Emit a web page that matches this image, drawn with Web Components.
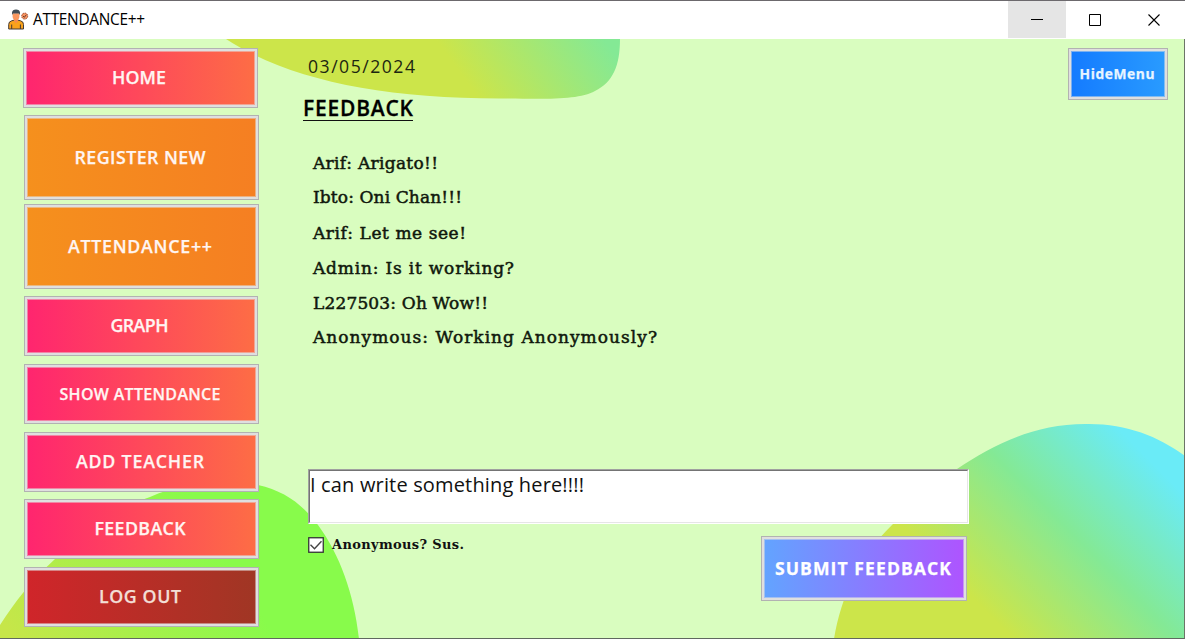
<!DOCTYPE html>
<html lang="en">
<head>
<meta charset="utf-8">
<title>ATTENDANCE++</title>
<style>
html,body{margin:0;height:100%;overflow:hidden;font-family:"Open Sans","Noto Sans",sans-serif}
</style>
</head>
<body>
<app-window></app-window>
<script>
const define = (name, html, setup) => {
  const t = document.createElement('template');
  t.innerHTML = html;
  customElements.define(name, class extends HTMLElement {
    constructor() {
      super();
      this.attachShadow({mode: 'open'}).append(t.content.cloneNode(true));
    }
    connectedCallback() { if (setup) setup(this, this.shadowRoot); }
  });
};

/* One line of text, tracked so that it fills the width given in "w". */
define('fit-text', `
<style>:host{display:block;white-space:nowrap;line-height:1}span{display:inline-block}</style>
<span><slot></slot></span>`, (el, root) => {
  const w = parseFloat(el.getAttribute('w')), s = root.querySelector('span');
  if (!w) return;
  const n = el.textContent.length;
  s.style.letterSpacing = '0px';
  const ls = (w - s.getBoundingClientRect().width) / (n - 1);
  s.style.letterSpacing = ls + 'px';
  s.style.marginRight = -ls + 'px';
});

define('raised-button', `
<style>
:host{display:block;box-sizing:border-box;border:1px solid #b2b2b2;height:var(--h,60px);width:var(--w,235px);color:#fff5f2;font-size:17.8px;font-weight:600;-webkit-text-stroke:.25px}
div{box-sizing:border-box;height:100%;border:2px solid #dfdfdf;background:var(--bg,linear-gradient(90deg,#ff256f,#fd6d45));display:flex;align-items:center;justify-content:center;padding:0 var(--pr,3px) var(--pb,0px) 0;box-shadow:inset 0 0 0 1px rgba(225,225,225,.5)}
</style>
<div><slot></slot></div>`);

define('person-icon', `
<style>:host{display:block;width:21px;height:21px}svg{display:block}</style>
<svg width="21" height="21" viewBox="0 0 21 21">
<path d="M.7 20v-4.5q0-3 3-3.700l2.800-.8h3l3 .8q3 .7 3 3.700V20z" fill="#f9a21b" stroke="#453b37"/>
<path d="M6 9v3l2 2.200 2-2.200V9z" fill="#f28a50"/>
<path d="M4.600 4.300v3q0 3.800 3.400 3.800t3.400-3.800v-3z" fill="#f9975f"/>
<path d="M4 6V3.500Q4.400.5 8 .5q3.700 0 4 3V6l-1-1.500H5z" fill="#414d56"/>
<path d="M3.700 15.500V20M12.400 15.500V20" stroke="#453b37"/>
<circle cx="16.700" cy="7.100" r="3" fill="#f79360" stroke="#9a4c32" stroke-dasharray="1.5 .8"/>
<path d="M15.100 7l1.200 1.300 2-2.500" fill="none" stroke="#653729"/>
</svg>`);

define('title-bar', `
<style>
:host{display:flex;height:39px;box-sizing:border-box;border-top:1px solid #6c696d;background:#fff;align-items:flex-start}
person-icon{margin:8px 0 0 8px}
fit-text{font-size:15.400px;margin:11px 0 0 4px;color:#000}
nav{display:flex;margin-left:auto;margin-right:1px}
nav span{width:58px;height:37px;display:block}
nav span.on{background:#e5e5e5}
nav span:last-child{width:60px}
svg{display:block}
</style>
<person-icon></person-icon><fit-text w="112">ATTENDANCE++</fit-text>
<nav>
<span class="on"><svg width="58" height="37"><path d="M23 18.500h12" stroke="#000"/></svg></span>
<span><svg width="58" height="37"><path d="M23.500 13.500h11v11h-11z" fill="none" stroke="#000"/></svg></span>
<span><svg width="58" height="37"><path d="M24.500 13.500l11 11m0-11l-11 11" stroke="#000" stroke-width="1.100"/></svg></span>
</nav>`);

define('page-backdrop', `
<style>:host{position:absolute;inset:0;z-index:-1;overflow:hidden}svg{display:block}</style>
<svg width="1185" height="600" viewBox="0 39 1185 600">
<defs>
<linearGradient id="a" gradientUnits="userSpaceOnUse" x1="480" y1="100" x2="590" y2="20"><stop stop-color="#cce54a"/><stop offset="1" stop-color="#84e995"/></linearGradient>
<linearGradient id="b" gradientUnits="userSpaceOnUse" x1="20" y1="650" x2="215" y2="535"><stop stop-color="#c6e649"/><stop offset=".45" stop-color="#a9ef4a"/><stop offset="1" stop-color="#88fb4b"/></linearGradient>
<linearGradient id="c" gradientUnits="userSpaceOnUse" x1="962" y1="587" x2="1120" y2="430"><stop stop-color="#cce54a"/><stop offset=".52" stop-color="#84e995"/><stop offset="1" stop-color="#6aebf7"/></linearGradient>
</defs>
<rect y="39" width="1185" height="600" fill="#d9fdbf"/>
<path d="M226 39C290 80 380 98 500 98.500C550 99 578 100 595 91C613 82 620 66 620 39z" fill="url(#a)"/>
<path d="M0 625C15 602 30 582 55 559C82 535 112 510 150 497C180 484 225 477 258 485C285 491 303 505 318 525C340 555 354 594 359 639H0z" fill="url(#b)"/>
<path d="M834 639C841 598 858 558 892 525C916 501 934 487 957 469C994 444 1035 424 1085 424C1125 423 1158 436 1185 456V639z" fill="url(#c)"/>
</svg>`);

define('side-menu', `
<style>
:host{display:flex;flex-direction:column;width:235px;padding:9px 0 0 24px}
raised-button{margin-top:8px}
.first{margin:0 0 0 -1px}
.o{--h:85px;--bg:linear-gradient(90deg,#f5901d,#f57f22)}
.s7{margin-top:7px}.s4{margin-top:4px}
.g{--w:234px;margin-top:7px}
.out{--bg:linear-gradient(90deg,#d0252a,#a03624);color:#f3ded6}
.small{font-size:16px}
</style>
<raised-button class="first"><fit-text w="54">HOME</fit-text></raised-button>
<raised-button class="o s7"><fit-text w="131">REGISTER NEW</fit-text></raised-button>
<raised-button class="o s4"><fit-text w="144">ATTENDANCE++</fit-text></raised-button>
<raised-button class="g"><fit-text w="58">GRAPH</fit-text></raised-button>
<raised-button><fit-text class="small" w="161">SHOW ATTENDANCE</fit-text></raised-button>
<raised-button><fit-text w="128">ADD TEACHER</fit-text></raised-button>
<raised-button class="s7"><fit-text w="91">FEEDBACK</fit-text></raised-button>
<raised-button class="out"><fit-text w="82">LOG OUT</fit-text></raised-button>`);

define('feedback-list', `
<style>
:host{display:grid;grid-template-rows:34px 36px 35px 35px 34px 34px;margin:29px 0 0 10px;height:208px;font-family:"DejaVu Serif",serif;font-size:17px;color:#10180c;-webkit-text-stroke:.5px #10180c}
</style>
<fit-text w="125">Arif: Arigato!!</fit-text>
<fit-text w="149">Ibto: Oni Chan!!!</fit-text>
<fit-text w="153">Arif: Let me see!</fit-text>
<fit-text w="201">Admin: Is it working?</fit-text>
<fit-text w="175">L227503: Oh Wow!!</fit-text>
<fit-text w="344">Anonymous: Working Anonymously?</fit-text>`);

define('sunken-input', `
<style>
:host{display:block;box-sizing:border-box;width:661px;height:55px;border:1px solid;border-color:#a0a0a0 #fff #fff #a0a0a0}
div{box-sizing:border-box;height:100%;background:#fff;border:1px solid;border-color:#747474 #e6e6e6 #e6e6e6 #747474;padding:4px 0 0 0;font-size:20px;color:#111}
</style>
<div><slot></slot></div>`);

define('check-option', `
<style>
:host{display:flex;gap:8px;align-items:center;height:17px;font:bold 13px "DejaVu Serif",serif;color:#111}
svg{display:block}
</style>
<svg width="16" height="16"><rect x=".75" y=".75" width="14.500" height="14.500" fill="#fff" stroke="#333" stroke-width="1.300"/><path d="M2.500 7.800l4 4 7-7.500" fill="none" stroke="#444" stroke-width="1.400"/></svg>
<slot></slot>`);

define('feedback-panel', `
<style>
:host{display:flex;flex-direction:column;width:666px;padding:19px 0 0 44px}
.date{font-size:17.600px;margin-left:5px;color:#1c2610;height:18px}
h1{margin:22px 0 0;width:110px;height:28px;box-sizing:border-box;font-size:21px;font-weight:600;line-height:1}
h1 fit-text{border-bottom:1.500px solid #111;height:23px;box-sizing:border-box;-webkit-text-stroke:.3px}
sunken-input{margin:106px 0 0 5px}
.row{display:flex;justify-content:space-between;padding:12px 2px 0 5px}
raised-button{--w:206px;--h:65px;--pr:2px;--bg:linear-gradient(90deg,#62a4ff,#ae54ff);color:#fff;font-size:17.600px;font-weight:700}
</style>
<fit-text class="date" w="107">03/05/2024</fit-text>
<h1><fit-text w="110">FEEDBACK</fit-text></h1>
<feedback-list></feedback-list>
<sunken-input><fit-text w="274">I can write something here!!!!</fit-text></sunken-input>
<div class="row"><check-option><fit-text w="132">Anonymous? Sus.</fit-text></check-option>
<raised-button><fit-text w="176">SUBMIT FEEDBACK</fit-text></raised-button></div>`);

define('app-window', `
<style>
:host{display:flex;flex-direction:column;width:1185px;height:639px;position:relative}
main{position:relative;z-index:0;display:flex;height:600px;box-sizing:border-box;border-right:1px solid #6c7468;border-bottom:1px solid #606860}
.hide{--w:100px;--h:52px;--pr:2px;--bg:linear-gradient(90deg,#147bff,#299bff);font-size:13.800px;color:#e8f5ff;margin:9px 16px 0 auto;font-weight:700}
</style>
<title-bar></title-bar>
<main><page-backdrop></page-backdrop><side-menu></side-menu><feedback-panel></feedback-panel>
<raised-button class="hide"><fit-text w="75">HideMenu</fit-text></raised-button></main>`);
</script>
</body>
</html>
